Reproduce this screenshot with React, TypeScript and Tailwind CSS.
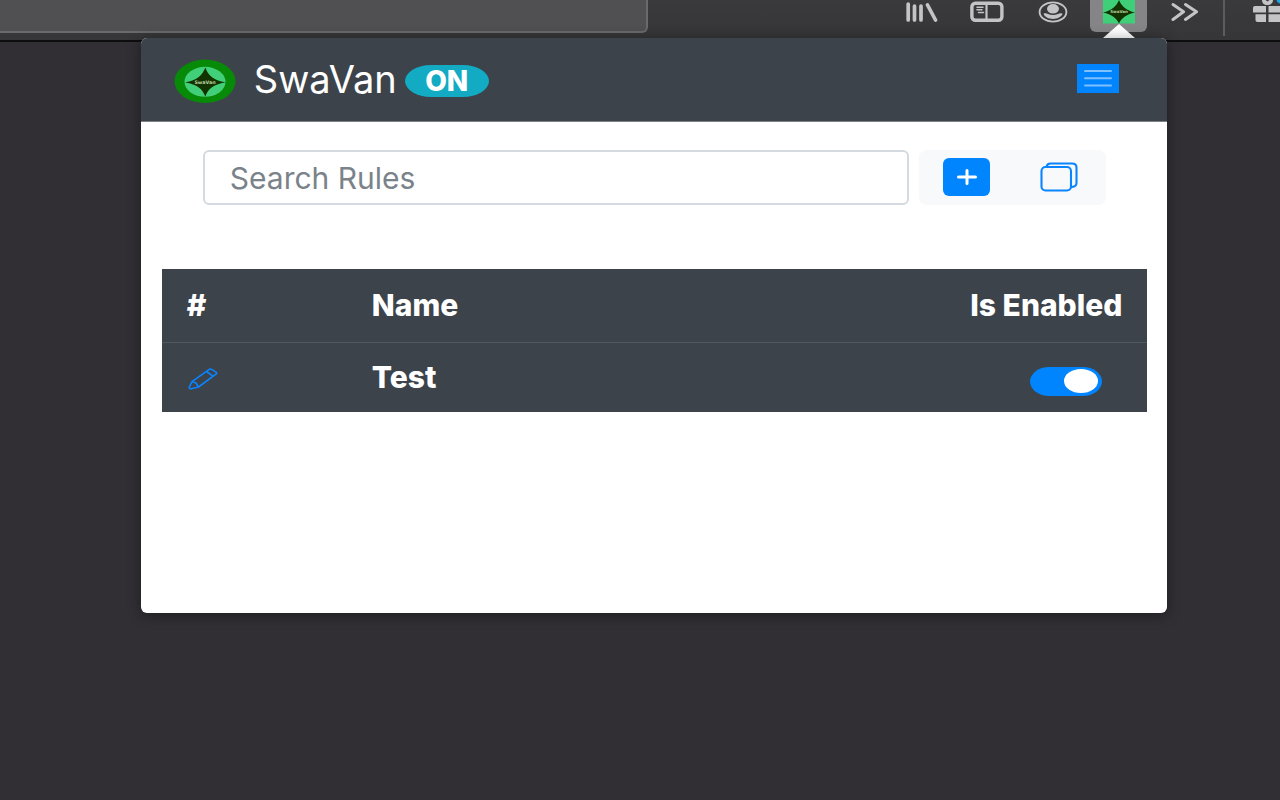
import { useState } from "react";

function LibraryIcon() {
  return (
    <svg className="h-6 w-8" viewBox="0 0 32 24" fill="none" stroke="#c4c4c6" strokeWidth="3.7" strokeLinecap="round" aria-hidden="true">
      <path d="M2.200 4v16M8.500 6v14M15 6v14" />
      <path d="M21.500 5l8 15" />
    </svg>
  );
}

function SidebarIcon() {
  return (
    <svg className="h-6 w-[34px]" viewBox="0 0 34 24" fill="none" stroke="#c4c4c6" aria-hidden="true">
      <rect x="1.9" y="3.3" width="30" height="17" rx="3.5" strokeWidth="3.4" />
      <path d="M16.5 4v16" strokeWidth="2.2" />
      <path d="M7 7.200h6M7 9.800h5M8.500 12.400h5" strokeWidth="1.500" strokeLinecap="round" />
    </svg>
  );
}

function AccountIcon() {
  return (
    <svg className="h-6 w-[30px]" viewBox="0 0 30 24" aria-hidden="true">
      <ellipse cx="15" cy="12" rx="13.4" ry="9.6" fill="none" stroke="#c4c4c6" strokeWidth="1.9" />
      <ellipse cx="15" cy="8.800" rx="6" ry="4.800" fill="#c4c4c6" />
      <path d="M5.500 13.800c1.500-.8 3-.6 4.500.3 3 1.300 7 1.300 10 0 1.500-.9 3-1.100 4.500-.3-1.200 3.300-5 5.200-9.500 5.200s-8.300-1.900-9.500-5.200z" fill="#c4c4c6" />
    </svg>
  );
}

function AddonIcon() {
  return (
    <svg className="h-6 w-8" viewBox="0 0 32 24" aria-hidden="true">
      <rect width="32" height="23.500" fill="#3fcf78" />
      <path d="M16 0C18.500 6 23 10.500 32 12.500C23 14.500 18.500 18 16 23.500C13.500 18 9 14.500 0 12.500C9 10.500 13.500 6 16 0z" fill="#123200" />
      <text x="16" y="13" textAnchor="middle" fontSize="4" fontWeight="700" fontFamily="DejaVu Sans, sans-serif" fill="#b9cf9f">SwaVan</text>
    </svg>
  );
}

function Logo() {
  return (
    <svg className="h-11 w-[62px]" viewBox="0 0 62 44" aria-hidden="true">
      <ellipse cx="31" cy="22.300" rx="30.500" ry="21.700" fill="#078a07" />
      <ellipse cx="31" cy="22.800" rx="20.500" ry="15" fill="#42cf79" />
      <path d="M31.300 8.500C34 16 39 21.500 51.500 23.200C39 25.500 34 30 31.300 37.500C28.500 30 23.500 25.500 11 23.200C23.500 21.500 28.500 16 31.300 8.500z" fill="#123200" />
      <text x="31" y="24.500" textAnchor="middle" fontSize="4.800" fontWeight="700" fontFamily="DejaVu Sans, sans-serif" fill="#b9cf9f">SwaVan</text>
    </svg>
  );
}

function OverflowIcon() {
  return (
    <svg className="h-6 w-7" viewBox="0 0 28 24" fill="none" stroke="#c4c4c6" strokeWidth="3" strokeLinecap="round" strokeLinejoin="round" aria-hidden="true">
      <path d="M2 4.500l10.500 7.300L2 19.500M14.500 4.500L25.500 11.800l-11 7.700" />
    </svg>
  );
}

function GiftIcon() {
  return (
    <svg className="h-6 w-7" viewBox="0 0 28 24" fill="#c4c4c6" aria-hidden="true">
      <path d="M9 0h3.500l2 1.500 2-1.500H20c0 3-2 5-5.500 5S9 3 9 0z" />
      <path d="M2 6h11v6.500H0V8c0-1.200.8-2 2-2zM15.500 6H28v6.500H15.500zM2.500 14.300H13V22H4.500c-1.200 0-2-.8-2-2zM15.500 14.300H28V22H15.500z" />
      <circle cx="28" cy="-1" r="4.500" fill="#1ba5e8" />
    </svg>
  );
}

function PencilIcon() {
  return (
    <svg className="h-[22px] w-[30px]" viewBox="0 0 30 22" fill="none" stroke="#0a84ff" strokeWidth="1.600" strokeLinejoin="round" aria-hidden="true">
      <path d="M21.300 1.300q1.200-.7 2.300 0l4.700 3q1 .8 0 1.600L10.500 19l-7.300 1.700q-2.200.1-1.900-1.500L4 13.700z" />
      <path d="M18.500 3.500l6.500 4.600M4 13.700l4 1.300 2.500 4" />
    </svg>
  );
}

export default function App() {
  const [enabled, setEnabled] = useState(true);
  const [query, setQuery] = useState("");

  return (
    <div className="min-h-screen overflow-hidden bg-[#312f34] font-[Inter,sans-serif] text-white">
      <header className="flex h-[42px] items-start border-b-2 border-[#0e0e10] bg-linear-to-b from-[#3a3a3c] to-[#363638]">
        <div className="h-[33px] w-[648px] shrink rounded-br-md border-r-2 border-b-2 border-[#6a6a6c] bg-[#505052]" />
        <nav aria-label="Browser toolbar" className="-mr-px ml-auto flex shrink-0 items-start">
          <button type="button" aria-label="Library" className="mr-8"><LibraryIcon /></button>
          <button type="button" aria-label="Sidebars" className="mr-[34px]"><SidebarIcon /></button>
          <button type="button" aria-label="Account" className="mr-[22px]"><AccountIcon /></button>
          <button type="button" aria-label="SwaVan" className="relative flex h-8 w-[57px] justify-center rounded-b-md bg-[#858587]">
            <AddonIcon />
            <svg className="absolute top-6 h-[14px] w-8" viewBox="0 0 32 14" aria-hidden="true">
              <path d="M16 0l16 14H0z" fill="#fff" />
            </svg>
          </button>
          <button type="button" aria-label="More tools" className="mr-6 ml-6"><OverflowIcon /></button>
          <span className="mr-7 h-9 w-[2px] bg-[#5c5c5e]" />
          <button type="button" aria-label="What's new"><GiftIcon /></button>
        </nav>
      </header>

      <main className="relative -mt-1 mr-[8.800%] ml-[11%] min-h-[575px] overflow-hidden rounded-md bg-white shadow-[0_2px_14px_rgba(0,0,0,0.400)]">
        <div className="flex h-[84px] items-center border-b border-[#7b8087] bg-[#3d434a] pt-[2px] pr-12 pl-[33px]">
          <Logo />
          <h1 className="ml-[18px] pb-1 text-[38px] leading-10">SwaVan</h1>
          <span className="ml-2 flex h-8 w-[84px] items-center justify-center bg-[#12abc3] text-[28px] leading-8 font-extrabold [border-radius:26px/16px]">ON</span>
          <button type="button" aria-label="Menu" className="mb-1 ml-auto flex h-[29px] w-[42px] items-center justify-center bg-[#0085ff]">
            <svg className="h-5 w-[30px]" viewBox="0 0 30 20" stroke="#7fc0ff" strokeWidth="2" strokeLinecap="round" aria-hidden="true">
              <path d="M2 2h26M2 9.200h26M2 16.400h26" />
            </svg>
          </button>
        </div>

        <div className="flex gap-[10px] pt-7 pr-[61px] pl-[62px]">
          <input
            type="search"
            aria-label="Search Rules"
            placeholder="Search Rules"
            value={query}
            onChange={(e) => setQuery(e.target.value)}
            className="h-[55px] min-w-0 flex-1 rounded-md border-2 border-[#d5dae0] bg-white px-[25px] text-[30px] text-[#343a40] placeholder:text-[#7a828a]"
          />
          <div className="flex h-[55px] w-[187px] items-center rounded-lg bg-[#f8f9fb] pr-7 pb-[2px] pl-6">
            <button type="button" aria-label="Add rule" className="flex h-[38px] w-[47px] items-center justify-center rounded-md bg-[#0085ff]">
              <svg className="h-4 w-5" viewBox="0 0 20 16" stroke="#fff" strokeWidth="3" strokeLinecap="round" aria-hidden="true">
                <path d="M1.500 8h17M10 1.500v13" />
              </svg>
            </button>
            <button type="button" aria-label="Duplicate rules" className="ml-auto">
              <svg className="h-[30px] w-[38px]" viewBox="0 0 38 30" fill="none" stroke="#0a84ff" strokeWidth="2.100" aria-hidden="true">
                <rect x="1.500" y="5" width="29.500" height="23.500" rx="4" />
                <path d="M6.500 5q.5-3.500 4-3.500h21.500q4.500 0 4.500 4V21q0 4-5.500 4" />
              </svg>
            </button>
          </div>
        </div>

        <div className="pt-16 pr-5 pl-[21px]">
          <table className="w-full bg-[#3d434a] text-left text-[30px] leading-9 font-extrabold">
            <thead>
              <tr className="h-[73px] border-b border-[#515963]">
                <th className="w-[186px] pl-[25px] font-extrabold">#</th>
                <th className="pl-6 font-extrabold">Name</th>
                <th className="pr-[25px] text-right font-extrabold">Is Enabled</th>
              </tr>
            </thead>
            <tbody>
              <tr className="h-[70px]">
                <td className="pt-1 pl-[26px]">
                  <button type="button" aria-label="Edit Test" className="flex"><PencilIcon /></button>
                </td>
                <td className="pl-6">Test</td>
                <td className="pt-2 pr-[45px]">
                  <input
                    type="checkbox"
                    aria-label="Enable Test"
                    checked={enabled}
                    onChange={(e) => setEnabled(e.target.checked)}
                    className="ml-auto flex h-[29px] w-[72px] cursor-pointer appearance-none items-center bg-[#868e96] px-1 [border-radius:20px/15px] before:h-6 before:w-[34px] before:rounded-[50%] before:bg-white checked:justify-end checked:bg-[#0085ff]"
                  />
                </td>
              </tr>
            </tbody>
          </table>
        </div>
      </main>
    </div>
  );
}
